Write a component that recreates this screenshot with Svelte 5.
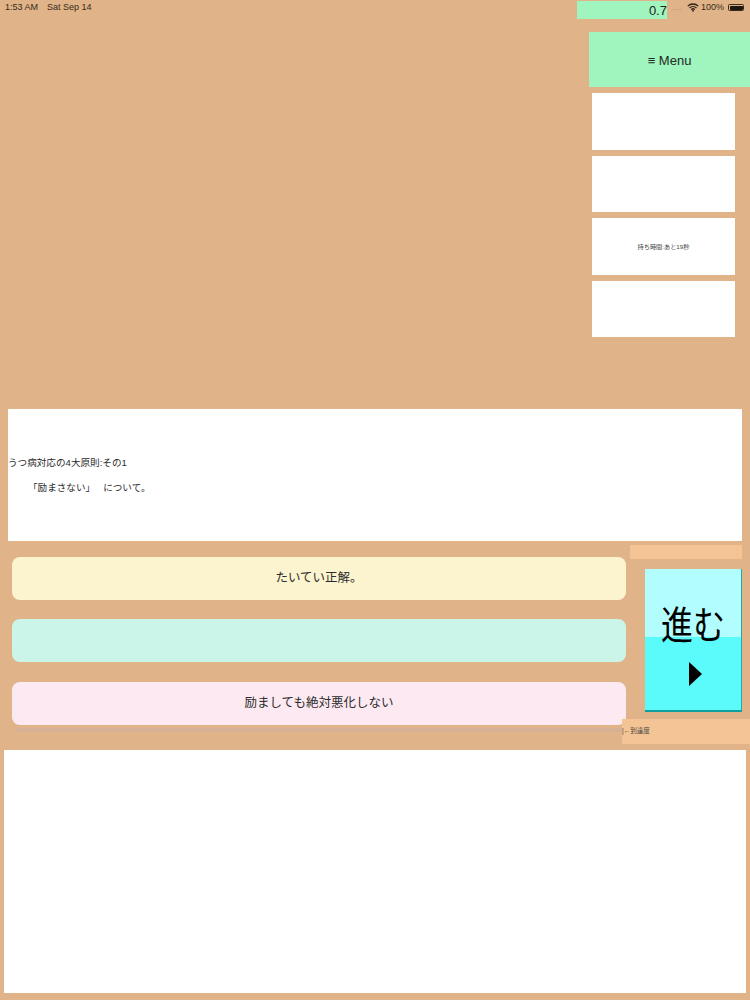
<script>
  const cards = ['', '', '持ち時間:あと19秒', ''];
  const choices = [
    { text: 'たいてい正解。', color: '#fbf4cf' },
    { text: '', color: '#cbf5e8' },
    { text: '励ましても絶対悪化しない', color: '#fde9f2' }
  ];
</script>

<main class="page">
  <header class="status">
    <span class="clock">1:53 AM</span>
    <span class="date">Sat Sep 14</span>
    <div class="timer">0.7</div>
    <span class="dots">....</span>
    <svg class="wifi" viewBox="0 0 16 12" width="12" height="9">
      <path d="M1 4.2a10 10 0 0 1 14 0M3.4 6.6a6.6 6.6 0 0 1 9.2 0M5.7 8.8a3.3 3.3 0 0 1 4.6 0" fill="none" stroke="#2c2118" stroke-width="1.7" />
      <path d="M8 12l-1.6-1.8a2.2 2.2 0 0 1 3.2 0z" fill="#2c2118" />
    </svg>
    <span class="pct">100%</span>
    <div class="battery"><div class="battery-fill"></div></div>
  </header>

  <section class="top">
    <div class="side">
      <div class="menu">≡ Menu</div>
      <div class="cards">
        {#each cards as card}
          <div class="card">{card}</div>
        {/each}
      </div>
    </div>
  </section>

  <section class="question">
    <p>うつ病対応の4大原則:その1</p>
    <p class="indent">「励まさない」<span class="about">について。</span></p>
  </section>

  <section class="answers">
    <div class="choices">
      {#each choices as choice}
        <div class="choice" style="background-color: {choice.color}">{choice.text}</div>
      {/each}
      <div class="track"></div>
    </div>
    <div class="controls">
      <div class="stripe"></div>
      <button class="go">
        <span class="go-label">進む</span>
        <svg class="go-arrow" viewBox="0 0 13 24" width="13" height="24"><path d="M0 0l13 12L0 24z" fill="#000" /></svg>
      </button>
      <div class="progress">|←到達度</div>
    </div>
  </section>

  <section class="notes"></section>
</main>

<style>
  :global(body) {
    margin: 0;
  }
  .page {
    width: 750px;
    height: 1000px;
    overflow: hidden;
    background-color: #e0b488;
    font-family: "Liberation Sans", "Noto Sans CJK JP", sans-serif;
    color: #2b2b2b;
  }

  .status {
    height: 19px;
    padding: 0 6px 0 5px;
    box-sizing: border-box;
    display: flex;
    align-items: flex-start;
    font-size: 9px;
    line-height: 15px;
    color: #3a2a1c;
  }
  .date {
    margin-left: 9px;
  }
  .timer {
    width: 90px;
    height: 18px;
    margin: 1px 0 0 auto;
    background-color: #a0f5bf;
    font-size: 13px;
    line-height: 19px;
    text-align: right;
    color: #222;
  }
  .dots {
    margin-left: 5px;
    color: #a8957f;
  }
  .wifi {
    margin: 3px 0 0 5px;
  }
  .pct {
    margin-left: 2px;
  }
  .battery {
    width: 16px;
    height: 7px;
    margin: 4px 0 0 4px;
    box-sizing: border-box;
    padding: 0.5px;
    border: 0.5px solid #3a2a1c;
    border-radius: 1.5px;
  }
  .battery-fill {
    height: 100%;
    background-color: #1d1510;
    border-radius: 1px;
  }

  .top {
    height: 390px;
    display: flex;
    justify-content: flex-end;
  }
  .side {
    width: 161px;
    padding-top: 13px;
  }
  .menu {
    height: 55px;
    background-color: #a0f5bf;
    font-size: 13px;
    line-height: 57px;
    text-align: center;
    color: #1f2a22;
  }
  .cards {
    width: 143px;
    margin: 6px 0 0 3px;
    display: flex;
    flex-direction: column;
    gap: 6px;
  }
  .card {
    height: 56.5px;
    background-color: #fff;
    font-size: 6.2px;
    line-height: 57px;
    text-align: center;
    color: #444;
  }

  .question {
    height: 132px;
    margin: 0 8px;
    box-sizing: border-box;
    padding-top: 46px;
    background-color: #fff;
    font-size: 9.6px;
    line-height: 15px;
  }
  .question p {
    margin: 0 0 10px;
  }
  .question .indent {
    padding-left: 20px;
  }
  .about {
    margin-left: 8px;
  }

  .answers {
    height: 209px;
    display: flex;
  }
  .choices {
    width: 614px;
    flex: none;
    margin-left: 12px;
    padding-top: 16px;
    display: flex;
    flex-direction: column;
    gap: 19.3px;
  }
  .choice {
    height: 43px;
    flex: none;
    border-radius: 8px;
    font-size: 12.5px;
    line-height: 43px;
    text-align: center;
    color: #2b2b2b;
  }
  .track {
    height: 4px;
    margin: -15.5px 4px 0;
    background-color: #d6b196;
  }
  .controls {
    flex: 1;
    min-width: 0;
    display: flex;
    flex-direction: column;
    align-items: flex-end;
  }
  .stripe {
    width: 112px;
    height: 14px;
    flex: none;
    margin: 4px 8px 0 0;
    background-color: #f5c494;
  }
  .go {
    width: 97px;
    height: 143px;
    flex: none;
    margin: 10px 8px 0 0;
    padding: 0;
    border: none;
    border-bottom: 2px solid #0f9f9f;
    border-right: 1px solid #2aa6a6;
    box-sizing: border-box;
    background: linear-gradient(#b2fdfd 48%, #5bfbfb 48%);
    display: flex;
    flex-direction: column;
    align-items: center;
    font-family: inherit;
  }
  .go-label {
    margin-top: 32px;
    font-size: 32px;
    line-height: 50px;
    color: #000;
    transform: scaleY(1.2);
  }
  .go-arrow {
    margin: 11px 0 0 5px;
  }
  .progress {
    width: 128px;
    height: 25px;
    flex: none;
    margin-top: 7px;
    box-sizing: border-box;
    background-color: #f5c494;
    font-size: 6.5px;
    line-height: 24px;
    color: #444;
  }

  .notes {
    height: 243px;
    margin: 0 4px;
    background-color: #fff;
  }
</style>
